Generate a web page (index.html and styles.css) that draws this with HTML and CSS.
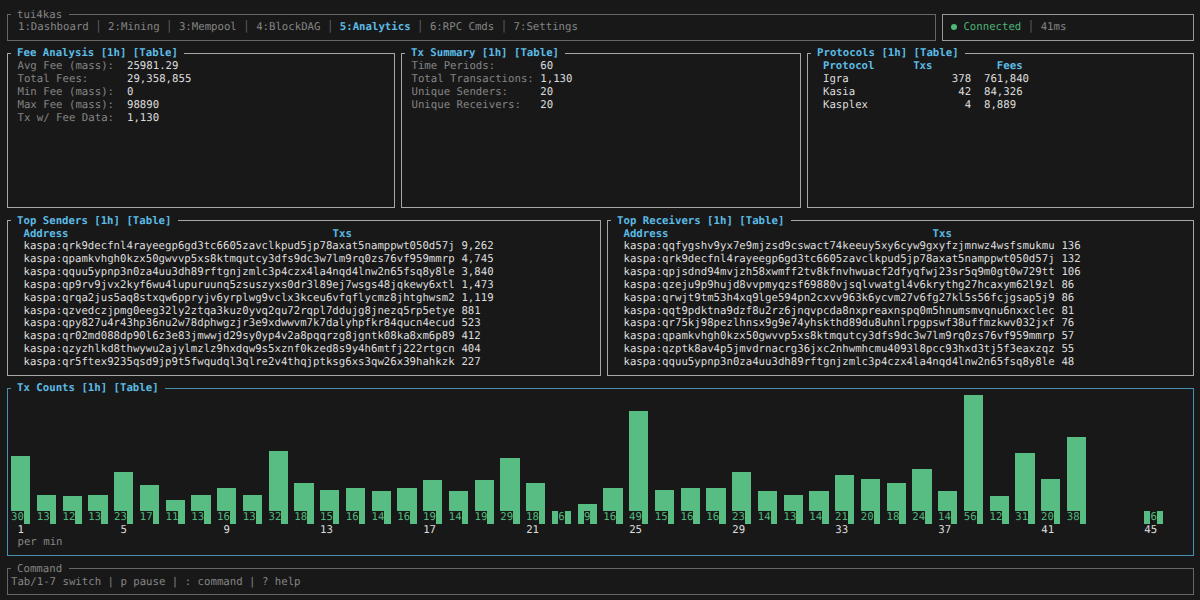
FILE: index.html
```html
<!DOCTYPE html>
<html lang="en">
<head>
<meta charset="utf-8">
<title>tui4kas</title>
<link rel="stylesheet" href="styles.css">
</head>
<body>
<div class="app">
  <header class="row-top">
    <section class="panel tabs-panel">
      <h2 class="title title-plain">tui4kas</h2>
      <nav class="tabs"><span>1:Dashboard</span><i>│</i><span>2:Mining</span><i>│</i><span>3:Mempool</span><i>│</i><span>4:BlockDAG</span><i>│</i><b>5:Analytics</b><i>│</i><span>6:RPC Cmds</span><i>│</i><span>7:Settings</span></nav>
    </section>
    <section class="panel status-panel">
      <div class="status"><span class="dot"></span><span class="ok">Connected</span><i>│</i><span>41ms</span></div>
    </section>
  </header>

  <div class="row-summary">
    <section class="panel panel-bright">
      <h2 class="title">Fee Analysis [1h] [Table]</h2>
      <dl class="kv kv-fee">
        <dt>Avg Fee (mass):</dt><dd>25981.29</dd>
        <dt>Total Fees:</dt><dd>29,358,855</dd>
        <dt>Min Fee (mass):</dt><dd>0</dd>
        <dt>Max Fee (mass):</dt><dd>98890</dd>
        <dt>Tx w/ Fee Data:</dt><dd>1,130</dd>
      </dl>
    </section>
    <section class="panel panel-bright">
      <h2 class="title">Tx Summary [1h] [Table]</h2>
      <dl class="kv kv-summary">
        <dt>Time Periods:</dt><dd>60</dd>
        <dt>Total Transactions:</dt><dd>1,130</dd>
        <dt>Unique Senders:</dt><dd>20</dd>
        <dt>Unique Receivers:</dt><dd>20</dd>
      </dl>
    </section>
    <section class="panel panel-bright">
      <h2 class="title">Protocols [1h] [Table]</h2>
      <div class="proto">
        <div class="th">Protocol</div><div class="th">Txs</div><div class="th th-fees">Fees</div>
        <div>Igra</div><div class="num">378</div><div>761,840</div>
        <div>Kasia</div><div class="num">42</div><div>84,326</div>
        <div>Kasplex</div><div class="num">4</div><div>8,889</div>
      </div>
    </section>
  </div>

  <div class="row-top-addr">
    <section class="panel panel-bright">
      <h2 class="title">Top Senders [1h] [Table]</h2>
      <div class="addr-head"><span class="addr-h">Address</span><span>Txs</span></div>
      <ul class="addr-list">
        <li><span class="addr">kaspa:qrk9decfnl4rayeegp6gd3tc6605zavclkpud5jp78axat5namppwt050d57j</span><span>9,262</span></li>
        <li><span class="addr">kaspa:qpamkvhgh0kzx50gwvvp5xs8ktmqutcy3dfs9dc3w7lm9rq0zs76vf959mmrp</span><span>4,745</span></li>
        <li><span class="addr">kaspa:qquu5ypnp3n0za4uu3dh89rftgnjzmlc3p4czx4la4nqd4lnw2n65fsq8y8le</span><span>3,840</span></li>
        <li><span class="addr">kaspa:qp9rv9jvx2kyf6wu4lupuruunq5zsuszyxs0dr3l89ej7wsgs48jqkewy6xtl</span><span>1,473</span></li>
        <li><span class="addr">kaspa:qrqa2jus5aq8stxqw6ppryjv6yrplwg9vclx3kceu6vfqflycmz8jhtghwsm2</span><span>1,119</span></li>
        <li><span class="addr">kaspa:qzvedczjpmg0eeg32ly2ztqa3kuz0yvq2qu72rqpl7ddujg8jnezq5rp5etye</span><span>881</span></li>
        <li><span class="addr">kaspa:qpy827u4r43hp36nu2w78dphwgzjr3e9xdwwvm7k7dalyhpfkr84qucn4ecud</span><span>523</span></li>
        <li><span class="addr">kaspa:qr02md088dp90l6z3e83jmwwjd29sy0yp4v2a8pqqrzg8jgntk08ka8xm6p89</span><span>412</span></li>
        <li><span class="addr">kaspa:qzyzhlkd8thwywu2ajylmzlz9hxdqw9s5xznf0kzed8s9y4h6mtfj222rtgcn</span><span>404</span></li>
        <li><span class="addr">kaspa:qr5ftex9235qsd9jp9t5fwqudql3qlre2v4thqjptksg6xs3qw26x39hahkzk</span><span>227</span></li>
      </ul>
    </section>
    <section class="panel panel-bright">
      <h2 class="title">Top Receivers [1h] [Table]</h2>
      <div class="addr-head"><span class="addr-h">Address</span><span>Txs</span></div>
      <ul class="addr-list">
        <li><span class="addr">kaspa:qqfygshv9yx7e9mjzsd9cswact74keeuy5xy6cyw9gxyfzjmnwz4wsfsmukmu</span><span>136</span></li>
        <li><span class="addr">kaspa:qrk9decfnl4rayeegp6gd3tc6605zavclkpud5jp78axat5namppwt050d57j</span><span>132</span></li>
        <li><span class="addr">kaspa:qpjsdnd94mvjzh58xwmff2tv8kfnvhwuacf2dfyqfwj23sr5q9m0gt0w729tt</span><span>106</span></li>
        <li><span class="addr">kaspa:qzeju9p9hujd8vvpmyqzsf69880vjsqlvwatgl4v6krythg27hcaxym62l9zl</span><span>86</span></li>
        <li><span class="addr">kaspa:qrwjt9tm53h4xq9lge594pn2cxvv963k6ycvm27v6fg27kl5s56fcjgsap5j9</span><span>86</span></li>
        <li><span class="addr">kaspa:qqt9pdktna9dzf8u2rz6jnqvpcda8nxpreaxnspq0m5hnumsmvqnu6nxxclec</span><span>81</span></li>
        <li><span class="addr">kaspa:qr75kj98pezlhnsx9g9e74yhskthd89du8uhnlrpgpswf38uffmzkwv032jxf</span><span>76</span></li>
        <li><span class="addr">kaspa:qpamkvhgh0kzx50gwvvp5xs8ktmqutcy3dfs9dc3w7lm9rq0zs76vf959mmrp</span><span>57</span></li>
        <li><span class="addr">kaspa:qzptk8av4p5jmvdrnacrg36jxc2nhwmhcmu4093l8pcc93hxd3tj5f3eaxzqz</span><span>55</span></li>
        <li><span class="addr">kaspa:qquu5ypnp3n0za4uu3dh89rftgnjzmlc3p4czx4la4nqd4lnw2n65fsq8y8le</span><span>48</span></li>
      </ul>
    </section>
  </div>

  <section class="panel chart-panel">
    <h2 class="title">Tx Counts [1h] [Table]</h2>
    <div class="bars">
      <div class="bar" style="height:68px"><span class="val">30</span></div>
      <div class="bar" style="height:29px"><span class="val">13</span></div>
      <div class="bar" style="height:28px"><span class="val">12</span></div>
      <div class="bar" style="height:29px"><span class="val">13</span></div>
      <div class="bar" style="height:52px"><span class="val">23</span></div>
      <div class="bar" style="height:39px"><span class="val">17</span></div>
      <div class="bar" style="height:24px"><span class="val">11</span></div>
      <div class="bar" style="height:29px"><span class="val">13</span></div>
      <div class="bar" style="height:36px"><span class="val">16</span></div>
      <div class="bar" style="height:29px"><span class="val">13</span></div>
      <div class="bar" style="height:73px"><span class="val">32</span></div>
      <div class="bar" style="height:41px"><span class="val">18</span></div>
      <div class="bar" style="height:34px"><span class="val">15</span></div>
      <div class="bar" style="height:36px"><span class="val">16</span></div>
      <div class="bar" style="height:33px"><span class="val">14</span></div>
      <div class="bar" style="height:36px"><span class="val">16</span></div>
      <div class="bar" style="height:44px"><span class="val">19</span></div>
      <div class="bar" style="height:33px"><span class="val">14</span></div>
      <div class="bar" style="height:44px"><span class="val">19</span></div>
      <div class="bar" style="height:66px"><span class="val">29</span></div>
      <div class="bar" style="height:41px"><span class="val">18</span></div>
      <div class="bar" style="height:13px"><span class="val val-one">6</span></div>
      <div class="bar" style="height:20px"><span class="val val-one">9</span></div>
      <div class="bar" style="height:36px"><span class="val">16</span></div>
      <div class="bar" style="height:113px"><span class="val">49</span></div>
      <div class="bar" style="height:34px"><span class="val">15</span></div>
      <div class="bar" style="height:36px"><span class="val">16</span></div>
      <div class="bar" style="height:36px"><span class="val">16</span></div>
      <div class="bar" style="height:52px"><span class="val">23</span></div>
      <div class="bar" style="height:33px"><span class="val">14</span></div>
      <div class="bar" style="height:29px"><span class="val">13</span></div>
      <div class="bar" style="height:33px"><span class="val">14</span></div>
      <div class="bar" style="height:49px"><span class="val">21</span></div>
      <div class="bar" style="height:45px"><span class="val">20</span></div>
      <div class="bar" style="height:41px"><span class="val">18</span></div>
      <div class="bar" style="height:55px"><span class="val">24</span></div>
      <div class="bar" style="height:33px"><span class="val">14</span></div>
      <div class="bar" style="height:129px"><span class="val">56</span></div>
      <div class="bar" style="height:28px"><span class="val">12</span></div>
      <div class="bar" style="height:71px"><span class="val">31</span></div>
      <div class="bar" style="height:45px"><span class="val">20</span></div>
      <div class="bar" style="height:87px"><span class="val">38</span></div>
      <div class="bar bar-empty"></div>
      <div class="bar bar-empty"></div>
      <div class="bar" style="height:13px"><span class="val val-one">6</span></div>
    </div>
    <div class="ticks"><span class="tick tick-one">1</span><span class="tick tick-one">5</span><span class="tick tick-one">9</span><span class="tick">13</span><span class="tick">17</span><span class="tick">21</span><span class="tick">25</span><span class="tick">29</span><span class="tick">33</span><span class="tick">37</span><span class="tick">41</span><span class="tick">45</span></div>
    <div class="unit">per min</div>
  </section>

  <section class="panel command-panel">
    <h2 class="title title-plain">Command</h2>
    <p class="hint">Tab/1-7 switch | p pause | : command | ? help</p>
  </section>
</div>
</body>
</html>
```
FILE: styles.css
```css
:root {
  --rh: 12.89px;
  --cw: 6.44px;
  --bg: #181818;
  --blue: #5cbce6;
  --muted: #848484;
  --text: #dcdcdc;
  --green: #58bd83;
}
* { box-sizing: border-box; }
html, body { margin: 0; height: 100%; background: var(--bg); }
body {
  font-family: "DejaVu Sans Mono", monospace;
  font-size: 10.7px;
  line-height: var(--rh);
  color: var(--text);
  text-rendering: geometricPrecision;
  overflow: hidden;
}
.app {
  display: flex;
  flex-direction: column;
  gap: calc(var(--rh) - 1px);
  width: 1200px;
  height: 600px;
  padding: 14px 6.5px 0 7px;
}
.panel {
  display: flex;
  flex-direction: column;
  min-width: 0;
  border: 1px solid #666;
}
.panel-bright { border-color: #a6a6a6; }
.title {
  position: relative;
  z-index: 1;
  align-self: flex-start;
  margin: calc(var(--rh) / -2) 0 0 2.6px;
  padding: 0 var(--cw);
  font-size: inherit;
  font-weight: 700;
  line-height: var(--rh);
  color: var(--blue);
  background: var(--bg);
}
.title-plain { font-weight: 400; color: var(--muted); }

.row-top {
  display: flex;
  gap: 6px;
  height: calc(var(--rh) * 2 + 1px);
}
.tabs-panel { flex: 1; }
.status-panel { width: 252px; border-color: #999; }
.tabs {
  display: flex;
  padding-left: 10px;
  color: var(--muted);
}
.tabs i, .status i {
  width: calc(var(--cw) * 3);
  font-style: normal;
  text-align: center;
  color: #666;
}
.tabs b { font-weight: 700; color: var(--blue); }
.status {
  display: flex;
  align-items: center;
  padding: 5.5px 0 0 8px;
  color: var(--muted);
}
.dot {
  flex: none;
  width: 6.5px;
  height: 6.5px;
  margin-right: 6.4px;
  border-radius: 50%;
  background: #4fb97a;
}
.ok { color: #4bb377; }

.row-summary {
  display: grid;
  grid-template-columns: 388px 400px 1fr;
  gap: 6px;
  height: calc(var(--rh) * 12 + 1px);
}
.kv {
  display: grid;
  margin: 0;
  padding-left: 9.5px;
}
.kv-fee { grid-template-columns: calc(var(--cw) * 17) 1fr; }
.kv-summary { grid-template-columns: calc(var(--cw) * 20) 1fr; }
.kv dt { color: var(--muted); }
.kv dd { margin: 0; }
.proto {
  display: grid;
  grid-template-columns: calc(var(--cw) * 14) calc(var(--cw) * 9) calc(var(--cw) * 2) 1fr;
  padding-left: 15px;
}
.proto > :nth-child(3n) { grid-column: 4; }
.th { font-weight: 700; color: var(--blue); }
.th-fees { padding-left: calc(var(--cw) * 2); }
.num { text-align: right; }

.row-top-addr {
  display: grid;
  grid-template-columns: 594px 1fr;
  gap: 6px;
  height: calc(var(--rh) * 12 + 1px);
}
.addr-head {
  display: flex;
  padding-left: 15.5px;
  font-weight: 700;
  color: var(--blue);
}
.addr-h { width: calc(var(--cw) * 48); }
.addr-list {
  margin: -0.4px 0 0;
  padding: 0 0 0 15.5px;
  list-style: none;
}
.addr-list li { display: flex; gap: var(--cw); }
.addr { width: calc(var(--cw) * 67); }

.chart-panel {
  height: calc(var(--rh) * 13 + 1px);
  border-color: #4790b2;
}
.bars {
  display: flex;
  flex: 1;
  min-height: 0;
  align-items: flex-end;
  gap: var(--cw);
  padding-left: 3px;
}
.bar {
  display: flex;
  flex: none;
  align-items: flex-end;
  width: calc(var(--cw) * 3);
  background: var(--green);
}
.bar-empty { background: none; }
.val {
  width: calc(var(--cw) * 2);
  height: var(--rh);
  color: #4fb97c;
  background: var(--bg);
}
.val-one { width: var(--cw); margin-left: var(--cw); }
.ticks { display: flex; padding-left: 3px; }
.tick { flex: none; width: calc(var(--cw) * 16); color: var(--text); }
.tick-one { padding-left: var(--cw); }
.unit {
  padding: 0 0 6px 9.5px;
  color: var(--muted);
}
.command-panel { height: calc(var(--rh) * 2 + 1px); }
.hint {
  margin: 0;
  padding-left: 3px;
  color: var(--muted);
}
```
